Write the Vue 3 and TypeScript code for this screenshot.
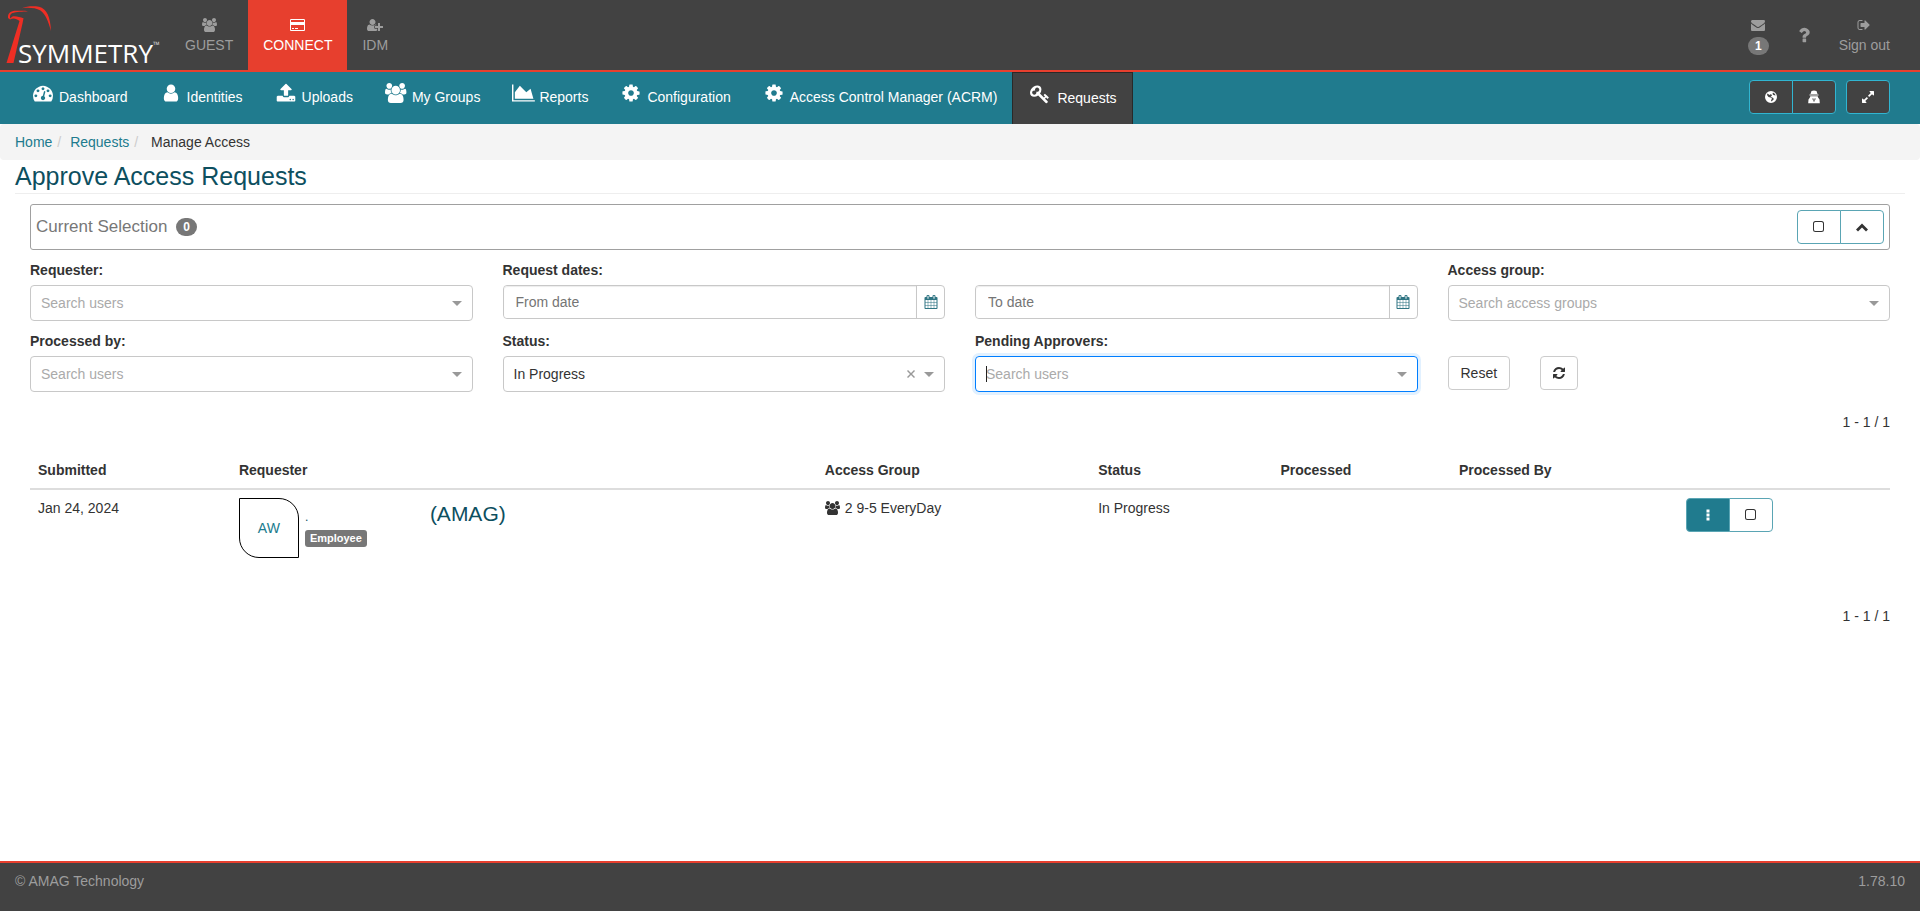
<script setup lang="ts">
import { ref } from 'vue'

interface Glyph {
  box: string
  d: string
}

const glyphs: Record<string, Glyph> = {
  users: {
    box: '0 0 1920 1792',
    d: 'M593 896q-162 5-265 128h-134q-82 0-138-40.5t-56-118.5q0-353 124-353 6 0 43.5 21t97.5 42.5 119 21.5q67 0 133-23-5 37-5 66 0 139 81 256zm1071 637q0 120-73 189.5t-194 69.5h-874q-121 0-194-69.5t-73-189.5q0-53 3.5-103.5t14-109 26.5-108.5 43-97.5 62-81 85.5-53.5 111.5-20q10 0 43 21.5t73 48 107 48 135 21.5 135-21.5 107-48 73-48 43-21.5q61 0 111.5 20t85.5 53.5 62 81 43 97.5 26.5 108.5 14 109 3.5 103.5zm-1024-1277q0 106-75 181t-181 75-181-75-75-181 75-181 181-75 181 75 75 181zm704 384q0 159-112.5 271.5t-271.5 112.5-271.5-112.5-112.5-271.5 112.5-271.5 271.5-112.5 271.5 112.5 112.5 271.5zm576 225q0 78-56 118.5t-138 40.5h-134q-103-123-265-128 81-117 81-256 0-29-5-66 66 23 133 23 59 0 119-21.5t97.5-42.5 43.5-21q124 0 124 353zm-128-609q0 106-75 181t-181 75-181-75-75-181 75-181 181-75 181 75 75 181z',
  },
  card: {
    box: '0 0 1920 1792',
    d: 'M1760 128q66 0 113 47t47 113v1216q0 66-47 113t-113 47h-1600q-66 0-113-47t-47-113v-1216q0-66 47-113t113-47h1600zm-1600 128q-13 0-22.500 9.500t-9.500 22.500v224h1664v-224q0-13-9.500-22.500t-22.500-9.500h-1600zm1600 1280q13 0 22.500-9.500t9.500-22.500v-608h-1664v608q0 13 9.500 22.500t22.500 9.500h1600zm-1504-128v-128h256v128h-256zm384 0v-128h384v128h-384z',
  },
  userPlus: {
    box: '0 0 2048 1792',
    d: 'M704 896q-159 0-271.5-112.5t-112.5-271.5 112.5-271.5 271.5-112.5 271.5 112.5 112.5 271.5-112.5 271.5-271.5 112.5zm960 128h352q13 0 22.5 9.5t9.5 22.5v192q0 13-9.5 22.5t-22.5 9.5h-352v352q0 13-9.5 22.5t-22.5 9.5h-192q-13 0-22.5-9.5t-9.5-22.5v-352h-352q-13 0-22.5-9.5t-9.5-22.5v-192q0-13 9.5-22.5t22.5-9.5h352v-352q0-13 9.5-22.5t22.5-9.5h192q13 0 22.5 9.5t9.5 22.5v352zm-736 224q0 52 38 90t90 38h256v238q-68 50-171 50h-874q-121 0-194-69t-73-190q0-53 3.5-103.5t14-109 26.5-108.5 43-97.5 62-81 85.5-53.5 111.5-20q19 0 39 17 79 61 154.5 91.5t164.5 30.5 164.5-30.5 154.5-91.5q20-17 39-17 132 0 217 96h-223q-52 0-90 38t-38 90v192z',
  },
  dashboard: {
    box: '0 0 1792 1792',
    d: 'M384 1152q0-53-37.5-90.5t-90.5-37.5-90.5 37.5-37.5 90.5 37.5 90.5 90.5 37.5 90.5-37.5 37.5-90.5zm192-448q0-53-37.5-90.5t-90.5-37.5-90.5 37.5-37.5 90.5 37.5 90.5 90.5 37.5 90.5-37.5 37.5-90.5zm428 481l101-382q6-26-7.5-48.5t-38.5-29.5-48 6.5-30 39.5l-101 382q-60 5-107 43.5t-63 98.5q-20 77 20 146t117 89 146-20 89-117q16-60-6-117t-72-91zm660-33q0-53-37.5-90.5t-90.5-37.5-90.5 37.5-37.5 90.5 37.5 90.5 90.5 37.5 90.5-37.5 37.5-90.5zm-640-640q0-53-37.5-90.5t-90.5-37.5-90.5 37.5-37.5 90.5 37.5 90.5 90.5 37.5 90.5-37.5 37.5-90.5zm448 192q0-53-37.5-90.5t-90.5-37.5-90.5 37.5-37.5 90.5 37.5 90.5 90.5 37.5 90.5-37.5 37.5-90.5zm320 448q0 261-141 483-19 29-54 29h-1402q-35 0-54-29-141-221-141-483 0-182 71-348t191-286 286-191 348-71 348 71 286 191 191 286 71 348z',
  },
  user: {
    box: '0 0 1792 1792',
    d: 'M1536 1399q0 109-62.5 187t-150.5 78h-854q-88 0-150.5-78t-62.5-187q0-85 8.500-160.500t31.500-152 58.500-131 94-89 134.500-34.500q131 128 313 128t313-128q76 0 134.500 34.500t94 89 58.500 131 31.500 152 8.500 160.500zm-256-887q0 159-112.500 271.500t-271.500 112.500-271.500-112.500-112.500-271.500 112.500-271.500 271.500-112.500 271.500 112.500 112.500 271.500z',
  },
  upload: {
    box: '0 0 1792 1792',
    d: 'M1344 1472q0-26-19-45t-45-19-45 19-19 45 19 45 45 19 45-19 19-45zm256 0q0-26-19-45t-45-19-45 19-19 45 19 45 45 19 45-19 19-45zm128-224v320q0 40-28 68t-68 28h-1472q-40 0-68-28t-28-68v-320q0-40 28-68t68-28h427q21 56 70.5 92t110.5 36h256q61 0 110.5-36t70.5-92h427q40 0 68 28t28 68zm-325-648q-17 40-59 40h-256v448q0 26-19 45t-45 19h-256q-26 0-45-19t-19-45v-448h-256q-42 0-59-40-17-39 14-69l448-448q18-19 45-19t45 19l448 448q31 30 14 69z',
  },
  chart: {
    box: '0 0 2048 1792',
    d: 'M2048 1536v128h-2048v-1536h128v1408h1920zm-384-1024l256 896h-1664v-576l448-576 576 576z',
  },
  cog: {
    box: '0 0 1792 1792',
    d: 'M1152 896q0-106-75-181t-181-75-181 75-75 181 75 181 181 75 181-75 75-181zm512-109v222q0 12-8 23t-20 13l-185 28q-19 54-39 91 35 50 107 138 10 12 10 25t-9 23q-27 37-99 108t-94 71q-12 0-26-9l-138-108q-44 23-91 38-16 136-29 186-7 28-36 28h-222q-14 0-24.5-8.5t-11.5-21.5l-28-184q-49-16-90-37l-141 107q-10 9-25 9-14 0-25-11-126-114-165-168-7-10-7-23 0-12 8-23 15-21 51-66.5t54-70.5q-27-50-41-99l-183-27q-13-2-21-12.5t-8-23.5v-222q0-12 8-23t19-13l186-28q14-46 39-92-40-57-107-138-10-12-10-24 0-10 9-23 26-36 98.5-107.5t94.5-71.5q13 0 26 10l138 107q44-23 91-38 16-136 29-186 7-28 36-28h222q14 0 24.5 8.5t11.5 21.5l28 184q49 16 90 37l142-107q9-9 24-9 13 0 25 10 129 119 165 170 7 8 7 22 0 12-8 23-15 21-51 66.5t-54 70.5q26 50 41 98l183 28q13 2 21 12.5t8 23.5z',
  },
  key: {
    box: '0 0 1792 1792',
    d: 'M832 512q0-80-56-136t-136-56-136 56-56 136q0 42 19 83-41-19-83-19-80 0-136 56t-56 136 56 136 136 56 136-56 56-136q0-42-19-83 41 19 83 19 80 0 136-56t56-136zm851 704q0 17-49 66t-66 49q-9 0-28.5-16t-36.5-33-38.5-40-24.5-26l-96 96 220 220q28 28 28 68 0 42-39 81t-81 39q-40 0-68-28l-671-671q-176 131-365 131-163 0-265.5-102.5t-102.5-265.5q0-160 95-313t248-248 313-95q163 0 265.5 102.5t102.5 265.5q0 189-131 365l355 355 96-96q-3-3-26-24.5t-40-38.5-33-36.5-16-28.5q0-17 49-66t66-49q13 0 23 10 6 6 46 44.5t82 79.5 86.5 86 73 78 28.5 41z',
  },
  envelope: {
    box: '0 0 1792 1792',
    d: 'M1792 710v794q0 66-47 113t-113 47h-1472q-66 0-113-47t-47-113v-794q44 49 101 87 362 246 497 345 57 42 92.5 65.5t94.5 48 110 24.5h2q51 0 110-24.5t94.5-48 92.5-65.5q170-123 498-345 57-39 100-87zm0-294q0 79-49 151t-122 123q-376 261-468 325-10 7-42.5 31t-54 38.5-52 32.5-57.5 27-50 9h-2q-23 0-50-9t-57.5-27-52-32.5-54-38.5-42.5-31q-91-64-262-182.5t-205-142.5q-62-42-117-115.5t-55-136.5q0-78 41.5-130t118.5-52h1472q65 0 112.5 47t47.5 113z',
  },
  question: {
    box: '0 0 1792 1792',
    d: 'M1088 1256v240q0 16-12 28t-28 12h-240q-16 0-28-12t-12-28v-240q0-16 12-28t28-12h240q16 0 28 12t12 28zm316-600q0 54-15.5 101t-35 76.5-55 59.5-57.5 43.5-61 35.5q-41 23-68.5 65t-27.5 67q0 17-12 32.5t-28 15.5h-240q-15 0-25.5-18.5t-10.5-37.5v-45q0-83 65-156.5t143-108.5q59-27 84-56t25-76q0-42-46.5-74t-107.5-32q-65 0-108 29-35 25-107 115-13 16-31 16-12 0-25-8l-164-125q-13-10-15.5-25t5.5-28q160-266 464-266 80 0 161 31t146 83 106 127.5 41 158.5z',
  },
  signOut: {
    box: '0 0 1792 1792',
    d: 'M704 1440q0 4 1 20t.5 26.5-3 23.5-10 19.5-20.5 6.5h-320q-119 0-203.5-84.5t-84.5-203.5v-704q0-119 84.5-203.5t203.5-84.5h320q13 0 22.5 9.5t9.5 22.5q0 4 1 20t.5 26.5-3 23.5-10 19.5-20.5 6.5h-320q-66 0-113 47t-47 113v704q0 66 47 113t113 47h312l11.5 1 11.5 3 8 5.5 7 9 2 13.5zm928-544q0 26-19 45l-544 544q-19 19-45 19t-45-19-19-45v-288h-448q-26 0-45-19t-19-45v-384q0-26 19-45t45-19h448v-288q0-26 19-45t45-19 45 19l544 544q19 19 19 45z',
  },
  calendar: {
    box: '0 0 1792 1792',
    d: 'M192 1664h288v-288h-288v288zm352 0h320v-288h-320v288zm-352-352h288v-320h-288v320zm352 0h320v-320h-320v320zm-352-384h288v-288h-288v288zm736 736h320v-288h-320v288zm-384-736h320v-288h-320v288zm768 736h288v-288h-288v288zm-384-352h320v-320h-320v320zm-352-864v-288q0-13-9.5-22.5t-22.5-9.5h-64q-13 0-22.5 9.5t-9.5 22.5v288q0 13 9.5 22.5t22.5 9.5h64q13 0 22.5-9.5t9.5-22.5zm736 864h288v-320h-288v320zm-384-384h320v-288h-320v288zm384 0h288v-288h-288v288zm32-480v-288q0-13-9.5-22.5t-22.5-9.5h-64q-13 0-22.5 9.5t-9.5 22.5v288q0 13 9.5 22.5t22.5 9.5h64q13 0 22.5-9.5t9.5-22.5zm384-64v1280q0 52-38 90t-90 38h-1408q-52 0-90-38t-38-90v-1280q0-52 38-90t90-38h128v-96q0-66 47-113t113-47h64q66 0 113 47t47 113v96h384v-96q0-66 47-113t113-47h64q66 0 113 47t47 113v96h128q52 0 90 38t38 90z',
  },
  refresh: {
    box: '0 0 1792 1792',
    d: 'M1639 1056q0 5-1 7-64 268-268 434.5t-478 166.5q-146 0-282.5-55t-243.5-157l-129 129q-19 19-45 19t-45-19-19-45v-448q0-26 19-45t45-19h448q26 0 45 19t19 45-19 45l-137 137q71 66 161 102t187 36q134 0 250-65t186-179q11-17 53-117 8-23 30-23h192q13 0 22.5 9.5t9.5 22.5zm25-800v448q0 26-19 45t-45 19h-448q-26 0-45-19t-19-45 19-45l138-138q-148-137-349-137-134 0-250 65t-186 179q-11 17-53 117-8 23-30 23h-199q-13 0-22.5-9.5t-9.5-22.5v-7q65-268 270-434.5t480-166.5q146 0 284 55.5t245 156.5l130-129q19-19 45-19t45 19 19 45z',
  },
  expand: {
    box: '0 0 1792 1792',
    d: 'M883 1056q0 13-10 23l-332 332 144 144q19 19 19 45t-19 45-45 19h-448q-26 0-45-19t-19-45v-448q0-26 19-45t45-19 45 19l144 144 332-332q10-10 23-10t23 10l114 114q10 10 10 23zm781-864v448q0 26-19 45t-45 19-45-19l-144-144-332 332q-10 10-23 10t-23-10l-114-114q-10-10-10-23t10-23l332-332-144-144q-19-19-19-45t19-45 45-19h448q26 0 45 19t19 45z',
  },
  square: {
    box: '0 0 14 14',
    d: 'M3.500 1h6a2.500 2.500 0 0 1 2.500 2.500v6a2.500 2.500 0 0 1-2.500 2.500h-6a2.500 2.500 0 0 1-2.500-2.500v-6a2.500 2.500 0 0 1 2.500-2.500zm0 1a1.500 1.500 0 0 0-1.500 1.500v6a1.500 1.500 0 0 0 1.500 1.500h6a1.500 1.500 0 0 0 1.500-1.500v-6a1.500 1.500 0 0 0-1.500-1.500z',
  },
  chevronUp: {
    box: '0 0 14 14',
    d: 'M7 3.500l6 6-2 2-4-4-4 4-2-2z',
  },
  dots: {
    box: '0 0 14 14',
    d: 'M5.500 1.500h3v3h-3zM5.500 5.500h3v3h-3zM5.500 9.500h3v3h-3z',
  },
  globe: {
    box: '0 0 14 14',
    d: 'M7 1a6 6 0 1 1 0 12a6 6 0 0 1 0-12zM3.500 3.500l-.5 1.500 1.500 2 2 .5 1.500 1-1 2 .5 1 2.500-2.500-1.500-1.500-2-.5 1.500-1.500-1-1.500-1.500 1zM9 2.500l-.5 1.500 1 1 2 .5-.5-1.500z',
  },
  secret: {
    box: '0 0 14 14',
    d: 'M4.500 1l2.500-.4 2.500.4 1 3h-7zM2.500 4.600h9v1h-9zM3.300 6.200h7.400l.4 1.300 1.400 2 .3 3.800h-11.600l.3-3.800 1.400-2zM5.300 8.500v1h.7v2h.6v-3zM7.400 8.500v3h.6v-2h.7v-1z',
  },
  close: {
    box: '0 0 10 10',
    d: 'M2 1l3 3 3-3 1 1-3 3 3 3-1 1-3-3-3 3-1-1 3-3-3-3z',
  },
}

const products = [
  { label: 'GUEST', icon: 'users', active: false },
  { label: 'CONNECT', icon: 'card', active: true },
  { label: 'IDM', icon: 'userPlus', active: false },
]

const sections = [
  { label: 'Dashboard', icon: 'dashboard' },
  { label: 'Identities', icon: 'user' },
  { label: 'Uploads', icon: 'upload' },
  { label: 'My Groups', icon: 'users' },
  { label: 'Reports', icon: 'chart' },
  { label: 'Configuration', icon: 'cog' },
  { label: 'Access Control Manager (ACRM)', icon: 'cog' },
  { label: 'Requests', icon: 'key', active: true },
]

const columns = ['Submitted', 'Requester', 'Access Group', 'Status', 'Processed', 'Processed By', '']

const requests = [
  {
    submitted: 'Jan 24, 2024',
    initials: 'AW',
    name: '.',
    company: '(AMAG)',
    kind: 'Employee',
    group: '2 9-5 EveryDay',
    status: 'In Progress',
  },
]

const requester = ref('')
const fromDate = ref('')
const toDate = ref('')
const accessGroup = ref('')
const processedBy = ref('')
const status = ref('In Progress')
const approver = ref('')

function reset(): void {
  requester.value = ''
  fromDate.value = ''
  toDate.value = ''
  accessGroup.value = ''
  processedBy.value = ''
  status.value = ''
  approver.value = ''
}
</script>

<template>
  <div class="page">
    <header class="top">
      <a class="logo" href="#" aria-label="Symmetry home">
        <svg width="170" height="70" viewBox="0 0 170 70">
          <g fill="#ee2e24">
            <path d="M8 18C7.500 13 11 10.800 16 10.800C21 10.600 25 10.600 28 11.200C23 11.600 16 11.800 12.500 13C10.500 13.700 9.800 15 10 18.500L12.500 16.500C16 15.800 20 17.300 23.500 18.200L22.600 23L13.500 63H6.500L19.500 21C16.500 18.500 13 17.800 10 19.500z" />
            <path d="M22 8.300C27 6.200 33 6 39 6.800C47 8.500 50.500 18 51 31C48.500 22 46 15 40.500 10.500C35 7.500 27 7.500 22 8.300z" />
          </g>
          <text class="logo-word" x="18" y="63">SYMMETRY</text>
          <text class="logo-mark" x="153" y="48">™</text>
        </svg>
      </a>
      <nav class="products" aria-label="Products">
        <a v-for="p in products" :key="p.label" href="#" class="product" :class="{ active: p.active }">
          <span class="product-icon">
            <svg class="icon" height="14" :viewBox="glyphs[p.icon].box"><path fill-rule="evenodd" :d="glyphs[p.icon].d" /></svg>
          </span>
          <span>{{ p.label }}</span>
        </a>
      </nav>
      <div class="account">
        <a href="#" class="product" aria-label="Messages">
          <span class="product-icon">
            <svg class="icon" height="14" :viewBox="glyphs.envelope.box"><path :d="glyphs.envelope.d" /></svg>
          </span>
          <span class="badge mail-badge">1</span>
        </a>
        <a href="#" class="help" aria-label="Help">
          <svg class="icon" width="20" height="20" :viewBox="glyphs.question.box"><path :d="glyphs.question.d" /></svg>
        </a>
        <a href="#" class="product">
          <span class="product-icon">
            <svg class="icon" height="14" :viewBox="glyphs.signOut.box"><path :d="glyphs.signOut.d" /></svg>
          </span>
          <span>Sign out</span>
        </a>
      </div>
    </header>

    <div class="bar">
      <nav class="sections" aria-label="Sections">
        <a v-for="s in sections" :key="s.label" href="#" class="section" :class="{ current: s.active }">
          <span class="section-icon">
            <svg class="icon" height="20" :viewBox="glyphs[s.icon].box"><path fill-rule="evenodd" :d="glyphs[s.icon].d" /></svg>
          </span>
          <span>{{ s.label }}</span>
        </a>
      </nav>
      <div class="bar-tools">
        <div class="group">
          <button class="btn dark" type="button" aria-label="Language">
            <svg class="icon" width="14" height="14" :viewBox="glyphs.globe.box"><path fill-rule="evenodd" :d="glyphs.globe.d" /></svg>
          </button>
          <button class="btn dark" type="button" aria-label="Privacy">
            <svg class="icon" width="14" height="14" :viewBox="glyphs.secret.box"><path fill-rule="evenodd" :d="glyphs.secret.d" /></svg>
          </button>
        </div>
        <div class="group">
          <button class="btn dark" type="button" aria-label="Full width">
            <svg class="icon" width="14" height="14" :viewBox="glyphs.expand.box"><path :d="glyphs.expand.d" /></svg>
          </button>
        </div>
      </div>
    </div>

    <ol class="crumbs">
      <li><a href="#">Home</a></li>
      <li><a href="#">Requests</a></li>
      <li class="here">Manage Access</li>
    </ol>

    <main class="main">
      <h1 class="title">Approve Access Requests</h1>

      <div class="content">
        <section class="selection">
          <span>Current Selection</span>
          <span class="badge">0</span>
          <div class="group selection-tools">
            <button class="btn light" type="button" aria-label="Select all">
              <svg class="icon" width="14" height="14" :viewBox="glyphs.square.box"><path fill-rule="evenodd" :d="glyphs.square.d" /></svg>
            </button>
            <button class="btn light" type="button" aria-label="Collapse">
              <svg class="icon" width="14" height="14" :viewBox="glyphs.chevronUp.box"><path :d="glyphs.chevronUp.d" /></svg>
            </button>
          </div>
        </section>

        <form class="filters" @submit.prevent>
          <div class="field">
            <label for="requester">Requester:</label>
            <div class="combo">
              <input id="requester" v-model="requester" type="text" role="combobox" placeholder="Search users" />
              <span class="caret"></span>
            </div>
          </div>
          <div class="field">
            <label for="from-date">Request dates:</label>
            <div class="date">
              <input id="from-date" v-model="fromDate" type="text" placeholder="From date" />
              <button type="button" aria-label="Pick from date">
                <svg class="icon" width="14" height="14" :viewBox="glyphs.calendar.box"><path :d="glyphs.calendar.d" /></svg>
              </button>
            </div>
          </div>
          <div class="field unlabelled">
            <div class="date">
              <input v-model="toDate" type="text" placeholder="To date" aria-label="To date" />
              <button type="button" aria-label="Pick to date">
                <svg class="icon" width="14" height="14" :viewBox="glyphs.calendar.box"><path :d="glyphs.calendar.d" /></svg>
              </button>
            </div>
          </div>
          <div class="field">
            <label for="access-group">Access group:</label>
            <div class="combo">
              <input id="access-group" v-model="accessGroup" type="text" role="combobox" placeholder="Search access groups" />
              <span class="caret"></span>
            </div>
          </div>
          <div class="field">
            <label for="processed-by">Processed by:</label>
            <div class="combo">
              <input id="processed-by" v-model="processedBy" type="text" role="combobox" placeholder="Search users" />
              <span class="caret"></span>
            </div>
          </div>
          <div class="field">
            <label for="status">Status:</label>
            <div class="combo">
              <select id="status" v-model="status">
                <option>In Progress</option>
                <option>Approved</option>
                <option>Rejected</option>
              </select>
              <button class="clear" type="button" aria-label="Clear status" @click="status = ''">
                <svg class="icon" width="10" height="10" :viewBox="glyphs.close.box"><path :d="glyphs.close.d" /></svg>
              </button>
              <span class="caret"></span>
            </div>
          </div>
          <div class="field">
            <label for="approver">Pending Approvers:</label>
            <div class="combo focused">
              <span class="cursor"></span>
              <input id="approver" v-model="approver" type="text" role="combobox" placeholder="Search users" />
              <span class="caret"></span>
            </div>
          </div>
          <div class="field unlabelled">
            <div class="actions">
              <button class="plain" type="button" @click="reset">Reset</button>
              <button class="plain square" type="button" aria-label="Refresh">
                <svg class="icon" width="14" height="14" :viewBox="glyphs.refresh.box"><path :d="glyphs.refresh.d" /></svg>
              </button>
            </div>
          </div>
        </form>

        <div class="pager">1 - 1 / 1</div>

        <table class="requests">
          <colgroup>
            <col class="c-date" />
            <col class="c-person" />
            <col class="c-group" />
            <col class="c-status" />
            <col class="c-done" />
            <col class="c-by" />
            <col />
          </colgroup>
          <thead>
            <tr>
              <th v-for="c in columns" :key="c" scope="col">{{ c }}</th>
            </tr>
          </thead>
          <tbody>
            <tr v-for="r in requests" :key="r.submitted">
              <td>{{ r.submitted }}</td>
              <td>
                <div class="person">
                  <a class="avatar" href="#">{{ r.initials }}</a>
                  <div class="who">
                    <div class="who-line">
                      <span class="name">{{ r.name }}</span>
                      <span class="company">{{ r.company }}</span>
                    </div>
                    <span class="tag">{{ r.kind }}</span>
                  </div>
                </div>
              </td>
              <td>
                <span class="access">
                  <svg class="icon" width="15" height="14" :viewBox="glyphs.users.box"><path :d="glyphs.users.d" /></svg>
                  <span>{{ r.group }}</span>
                </span>
              </td>
              <td>{{ r.status }}</td>
              <td></td>
              <td></td>
              <td>
                <div class="group">
                  <button class="btn teal" type="button" aria-label="Actions">
                    <svg class="icon" width="14" height="14" :viewBox="glyphs.dots.box"><path :d="glyphs.dots.d" /></svg>
                  </button>
                  <button class="btn light" type="button" aria-label="Select request">
                    <svg class="icon" width="14" height="14" :viewBox="glyphs.square.box"><path fill-rule="evenodd" :d="glyphs.square.d" /></svg>
                  </button>
                </div>
              </td>
            </tr>
          </tbody>
        </table>

        <div class="pager bottom">1 - 1 / 1</div>
      </div>
    </main>

    <footer class="footer">
      <span>© AMAG Technology</span>
      <span>1.78.10</span>
    </footer>
  </div>
</template>

<style>
body {
  margin: 0;
}
</style>

<style scoped>
.page {
  display: flex;
  flex-direction: column;
  min-height: 100vh;
  background: #fff;
  color: #333;
  font-family: "Liberation Sans", Arial, sans-serif;
  font-size: 14px;
  line-height: 20px;
}
.page *,
.page *::before {
  box-sizing: border-box;
}
a {
  color: #207b8e;
  text-decoration: none;
}
button,
input,
select {
  margin: 0;
  font: inherit;
}
button {
  cursor: pointer;
}
.icon {
  display: block;
  fill: currentColor;
}

/* Top bar */
.top {
  display: flex;
  height: 72px;
  border-bottom: 2px solid #e73f2e;
  background: #424242;
}
.logo-word {
  fill: #fff;
  font-family: "Open Sans", "Noto Sans", sans-serif;
  font-size: 26px;
}
.logo-mark {
  fill: #ccc;
  font-family: "Open Sans", sans-serif;
  font-size: 9px;
}
.products,
.account {
  display: flex;
}
.account {
  margin-left: auto;
  padding-right: 15px;
}
.product {
  display: flex;
  flex-direction: column;
  align-items: center;
  height: 70px;
  padding: 15px 15px 0;
  color: #9d9d9d;
}
.product.active {
  background: #e73f2e;
  color: #fff;
}
.product-icon {
  display: flex;
  align-items: center;
  height: 20px;
}
.help {
  display: flex;
  align-items: center;
  padding: 0 10px;
  color: #9d9d9d;
}
.badge {
  display: inline-block;
  min-width: 20px;
  padding: 3px 7px;
  border-radius: 9px;
  background: #777;
  color: #fff;
  font-size: 12px;
  font-weight: bold;
  line-height: 12px;
  text-align: center;
}
.mail-badge {
  margin-top: 2px;
}

/* Section bar */
.bar {
  display: flex;
  justify-content: space-between;
  height: 52px;
  padding: 0 30px 0 15px;
  background: #207b8e;
}
.sections {
  display: flex;
}
.section {
  display: flex;
  gap: 3px;
  padding: 15px 15px 0;
  color: #fff;
}
.section.current {
  gap: 4px;
  padding: 15px 15px 0 14px;
  border: 1px solid #292929;
  border-bottom: 0;
  background: #424242;
}
.section-icon {
  display: flex;
  justify-content: center;
  width: 26px;
  height: 20px;
  margin-top: -4px;
}
.bar-tools {
  display: flex;
  gap: 10px;
  padding-top: 8px;
}
.group {
  display: flex;
}
.btn {
  display: flex;
  align-items: center;
  justify-content: center;
  width: 44px;
  height: 34px;
  padding: 0;
  border: 1px solid #5aa5b4;
  border-radius: 4px;
}
.btn:first-child:not(:last-child) {
  border-radius: 4px 0 0 4px;
}
.btn + .btn {
  margin-left: -1px;
  border-radius: 0 4px 4px 0;
}
.btn.dark {
  border-color: #31b5d1;
  background: #424242;
  color: #fff;
}
.btn.light {
  background: #fff;
  color: #333;
}
.btn.teal {
  background: #207b8e;
  color: #fff;
}

/* Breadcrumb */
.crumbs {
  display: flex;
  margin: 0;
  padding: 8px 15px;
  border-radius: 4px;
  background: #f4f4f4;
  list-style: none;
}
.crumbs li + li::before {
  content: "/\00a0";
  padding: 0 5px;
  color: #ccc;
}
.crumbs .here::before {
  margin-right: 4px;
}

/* Main area */
.main {
  flex: 1;
  padding: 0 15px;
}
.title {
  margin: 0 0 10px;
  padding: 3px 0;
  border-bottom: 1px solid #eee;
  color: #0d4f5f;
  font-size: 25px;
  font-weight: normal;
  line-height: 27px;
}
.content {
  padding: 0 15px;
}
.selection {
  display: flex;
  align-items: center;
  height: 46px;
  padding: 0 5px;
  border: 1px solid #a0a0a0;
  border-radius: 3px;
  color: #777;
  font-size: 17px;
}
.selection .badge {
  margin-left: 9px;
}
.selection-tools {
  margin-left: auto;
}
.filters {
  display: grid;
  grid-template-columns: repeat(4, 1fr);
  gap: 10px 30px;
  padding-top: 10px;
}
.field label {
  display: block;
  margin-bottom: 5px;
  font-weight: bold;
}
.unlabelled {
  padding-top: 25px;
}
.combo {
  position: relative;
  display: flex;
  align-items: center;
  height: 36px;
  padding: 0 10px;
  border: 1px solid #c8c8c8;
  border-radius: 4px;
}
.combo.focused {
  border-color: #007eff;
  box-shadow: 0 0 0 3px #e2f1ff;
}
.combo input,
.combo select {
  flex: 1;
  min-width: 0;
  height: 34px;
  padding: 0;
  border: 0;
  background: none;
  color: #333;
  outline: none;
  appearance: none;
}
.combo input::placeholder {
  color: #aaa;
  opacity: 1;
}
.caret {
  border: 5px solid transparent;
  border-top-color: #999;
  border-bottom-width: 0;
}
.cursor {
  position: absolute;
  top: 9px;
  left: 10px;
  width: 1px;
  height: 16px;
  background: #222;
}
.clear {
  padding: 0;
  border: 0;
  margin-right: 8px;
  background: none;
  color: #999;
}
.date {
  display: flex;
  height: 34px;
  border: 1px solid #c8c8c8;
  border-radius: 4px;
}
.date input {
  flex: 1;
  min-width: 0;
  padding: 0 12px;
  border: 0;
  border-radius: 4px 0 0 4px;
  box-shadow: inset 0 1px 1px rgba(0, 0, 0, 0.075);
  outline: none;
}
.date input::placeholder {
  color: #757575;
  opacity: 1;
}
.date button {
  display: flex;
  align-items: center;
  justify-content: center;
  width: 28px;
  padding: 0;
  border: 0;
  border-left: 1px solid #c8c8c8;
  background: none;
  color: #2f7583;
}
.actions {
  display: flex;
  gap: 30px;
}
.plain {
  height: 34px;
  padding: 0 12px;
  border: 1px solid #ccc;
  border-radius: 4px;
  background: #fff;
  color: #333;
}
.plain.square {
  width: 38px;
  padding: 0 11px;
}
.pager {
  padding: 20px 0;
  text-align: right;
}
.pager.bottom {
  padding-top: 40px;
}

/* Requests table */
.requests {
  width: 100%;
  border-collapse: collapse;
  table-layout: fixed;
}
.c-date {
  width: 10.8%;
}
.c-person {
  width: 31.5%;
}
.c-group {
  width: 14.7%;
}
.c-status {
  width: 9.8%;
}
.c-done {
  width: 9.6%;
}
.c-by {
  width: 12.2%;
}
.requests th {
  padding: 8px;
  border-bottom: 2px solid #ddd;
  text-align: left;
}
.requests td {
  padding: 8px;
  vertical-align: top;
}
.person {
  display: flex;
  gap: 6px;
}
.avatar {
  display: flex;
  align-items: center;
  justify-content: center;
  width: 60px;
  height: 60px;
  border: 1px solid #000;
  border-radius: 0 20px;
}
.who {
  padding-top: 4px;
}
.who-line {
  display: flex;
  align-items: baseline;
  height: 28px;
  color: #0d4f5f;
  line-height: 24px;
}
.name {
  width: 125px;
  font-size: 12px;
}
.company {
  font-size: 21px;
}
.tag {
  display: block;
  width: max-content;
  padding: 3px 5px;
  border-radius: 3px;
  background: #777;
  color: #fff;
  font-size: 11px;
  font-weight: bold;
  line-height: 11px;
}
.access {
  display: flex;
  align-items: center;
  gap: 5px;
}

/* Footer */
.footer {
  display: flex;
  justify-content: space-between;
  height: 50px;
  padding: 8px 15px;
  border-top: 2px solid #e73f2e;
  background: #424242;
  color: #9d9d9d;
}
</style>
